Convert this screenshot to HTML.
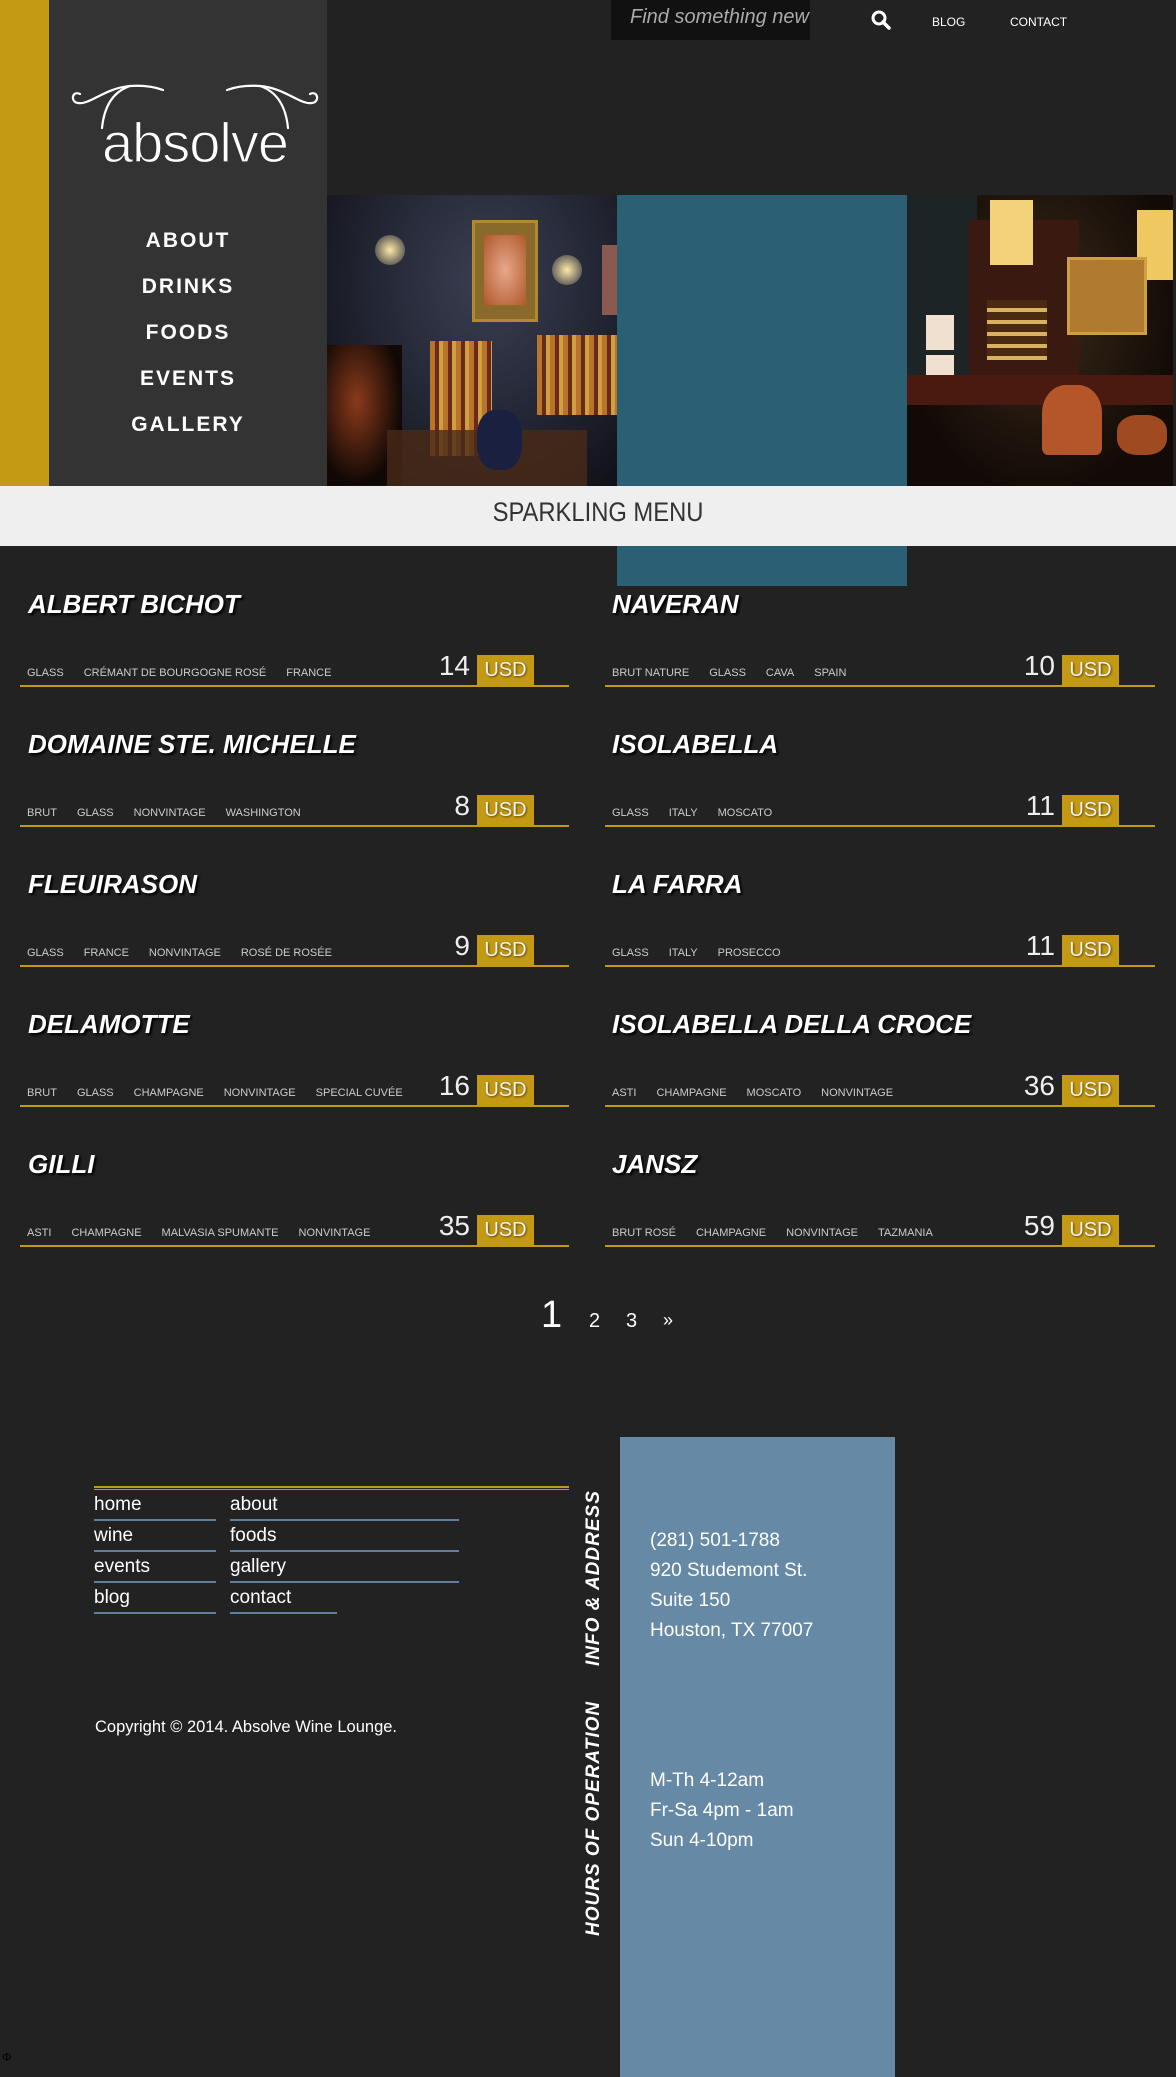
<!DOCTYPE html>
<html><head><meta charset="utf-8"><style>
*{margin:0;padding:0;box-sizing:border-box}
body{width:1176px;height:2077px;background:#222;position:relative;overflow:hidden;font-family:"Liberation Sans",sans-serif;color:#fff}
.a{position:absolute}
.nav{position:absolute;left:49px;width:278px;text-align:center;font-weight:bold;font-size:21px;letter-spacing:2px;color:#fff}
.t{position:absolute;font-weight:bold;font-style:italic;font-size:26px;text-shadow:2px 2px 2px #000;white-space:nowrap}
.tg{position:absolute;font-size:11px;color:#ccc;white-space:nowrap;word-spacing:0}
.tg span{margin-right:20px}
.pr{position:absolute;font-size:28px;color:#eee;text-align:right;width:60px}
.usd{position:absolute;width:57px;height:30px;background:#c49a15;color:#f3f3f3;font-size:20px;text-align:center;line-height:30px;text-shadow:1px 1px 2px #5a4300}
.ln{position:absolute;height:2px;background:#c49a15}
.fl{position:absolute;font-size:19px;color:#fff;border-bottom:2px solid #5f7f9c;height:31px;line-height:30px}
.inf{position:absolute;left:650px;font-size:19px;line-height:30px;color:#fff}
.vt{position:absolute;font-weight:bold;font-style:italic;font-size:19px;letter-spacing:1px;transform:rotate(-90deg);transform-origin:0 0;white-space:nowrap}
</style></head><body>
<div class="a" style="left:0;top:0;width:49px;height:486px;background:#c49a15"></div>
<div class="a" style="left:49px;top:0;width:278px;height:486px;background:#333"></div>
<div class="a" style="left:611px;top:0;width:199px;height:40px;background:#111"></div>
<div class="a" style="left:630px;top:6px;font-size:20px;font-style:italic;color:#aaa">Find something new</div>
<svg class="a" style="left:870px;top:9px" width="22" height="22" viewBox="0 0 22 22"><circle cx="9" cy="9" r="6" fill="none" stroke="#fff" stroke-width="3"/><line x1="13" y1="13" x2="19" y2="19" stroke="#fff" stroke-width="3.5" stroke-linecap="round"/></svg>
<div class="a" style="left:932px;top:15px;font-size:12px">BLOG</div>
<div class="a" style="left:1010px;top:15px;font-size:12px">CONTACT</div>
<svg class="a" style="left:60px;top:70px" width="270" height="110" viewBox="0 0 270 110">
<g fill="none" stroke="#fff" stroke-width="2.2" stroke-linecap="round">
<path d="M20 24 C12 20 10 32 18 33 C30 35 45 18 70 16 C85 15 95 17 103 20"/>
<path d="M70 16 C52 22 44 38 42 58"/>
<path d="M250 24 C258 20 260 32 252 33 C240 35 225 18 200 16 C185 15 175 17 167 20"/>
<path d="M200 16 C218 22 226 38 228 58"/>
</g>
<text x="135" y="92" text-anchor="middle" font-family="Liberation Sans" font-size="56" fill="#fff" stroke="#333" stroke-width="1.2" letter-spacing="-1">absolve</text>
</svg>
<div class="nav" style="top:229px">ABOUT</div>
<div class="nav" style="top:275px">DRINKS</div>
<div class="nav" style="top:321px">FOODS</div>
<div class="nav" style="top:367px">EVENTS</div>
<div class="nav" style="top:413px">GALLERY</div>
<div class="a" style="left:327px;top:195px;width:290px;height:291px;background:radial-gradient(ellipse at 55% 30%,#3a3f52 0%,#232634 50%,#0c0b10 100%);overflow:hidden">
<div class="a" style="left:145px;top:25px;width:66px;height:102px;background:#8a6a2a;border:3px solid #b08a30"></div>
<div class="a" style="left:157px;top:40px;width:42px;height:70px;background:radial-gradient(#e6a88a,#b0572a)"></div>
<div class="a" style="left:48px;top:40px;width:30px;height:30px;border-radius:50%;background:radial-gradient(#ffe9a8,rgba(255,200,100,0))"></div>
<div class="a" style="left:225px;top:60px;width:30px;height:30px;border-radius:50%;background:radial-gradient(#ffe9a8,rgba(255,200,100,0))"></div>
<div class="a" style="left:275px;top:50px;width:15px;height:70px;background:#8a5a50"></div>
<div class="a" style="left:103px;top:146px;width:62px;height:115px;background:repeating-linear-gradient(90deg,#b8742a 0 5px,#6a2a1a 5px 9px,#d0a040 9px 13px)"></div>
<div class="a" style="left:210px;top:140px;width:80px;height:80px;background:repeating-linear-gradient(90deg,#b8742a 0 5px,#6a2a1a 5px 9px,#d0a040 9px 13px)"></div>
<div class="a" style="left:0;top:150px;width:75px;height:140px;background:radial-gradient(ellipse at 40% 40%,#8a3a1a,#100805 70%)"></div>
<div class="a" style="left:60px;top:235px;width:200px;height:56px;background:#4a2a18;opacity:.8"></div>
<div class="a" style="left:150px;top:215px;width:45px;height:60px;border-radius:40%;background:#1a2040"></div>
</div>
<div class="a" style="left:617px;top:195px;width:290px;height:391px;background:#2b5f74"></div>
<div class="a" style="left:907px;top:195px;width:266px;height:291px;background:radial-gradient(ellipse at 50% 40%,#3a2a1a,#120a06 75%);overflow:hidden">
<div class="a" style="left:0;top:0;width:70px;height:180px;background:#1c2426"></div>
<div class="a" style="left:62px;top:25px;width:110px;height:160px;background:#3a1a10"></div>
<div class="a" style="left:83px;top:5px;width:43px;height:65px;background:#f4d27a"></div>
<div class="a" style="left:230px;top:15px;width:36px;height:70px;background:#f0c860"></div>
<div class="a" style="left:160px;top:62px;width:80px;height:78px;background:#b07a30;border:3px solid #d0a040"></div>
<div class="a" style="left:80px;top:105px;width:60px;height:60px;background:repeating-linear-gradient(0deg,#d8b060 0 4px,#4a2a10 4px 12px)"></div>
<div class="a" style="left:19px;top:120px;width:28px;height:35px;background:#f0e0d0"></div>
<div class="a" style="left:19px;top:160px;width:28px;height:28px;background:#f0e0d0"></div>
<div class="a" style="left:0;top:180px;width:266px;height:30px;background:#4a1a10"></div>
<div class="a" style="left:135px;top:190px;width:60px;height:70px;border-radius:40% 40% 10% 10%;background:#b4562a"></div>
<div class="a" style="left:210px;top:220px;width:50px;height:40px;border-radius:40%;background:#a04a22"></div>
</div>
<div class="a" style="left:0;top:486px;width:1176px;height:60px;background:#efefef"></div>
<div class="a" style="left:0;top:497px;width:1196px;text-align:center;font-size:27px;color:#333;transform:scaleX(.88);transform-origin:598px 0">SPARKLING MENU</div>

<div class="t" style="left:28px;top:589px">ALBERT BICHOT</div>
<div class="tg" style="left:27px;top:667px"><span>GLASS</span><span>CRÉMANT DE BOURGOGNE ROSÉ</span><span>FRANCE</span></div>
<div class="pr" style="left:410px;top:650px">14</div><div class="usd" style="left:477px;top:655px">USD</div><div class="ln" style="left:20px;top:685px;width:549px"></div>
<div class="t" style="left:612px;top:589px">NAVERAN</div>
<div class="tg" style="left:612px;top:667px"><span>BRUT NATURE</span><span>GLASS</span><span>CAVA</span><span>SPAIN</span></div>
<div class="pr" style="left:995px;top:650px">10</div><div class="usd" style="left:1062px;top:655px">USD</div><div class="ln" style="left:605px;top:685px;width:550px"></div>

<div class="t" style="left:28px;top:729px">DOMAINE STE. MICHELLE</div>
<div class="tg" style="left:27px;top:807px"><span>BRUT</span><span>GLASS</span><span>NONVINTAGE</span><span>WASHINGTON</span></div>
<div class="pr" style="left:410px;top:790px">8</div><div class="usd" style="left:477px;top:795px">USD</div><div class="ln" style="left:20px;top:825px;width:549px"></div>
<div class="t" style="left:612px;top:729px">ISOLABELLA</div>
<div class="tg" style="left:612px;top:807px"><span>GLASS</span><span>ITALY</span><span>MOSCATO</span></div>
<div class="pr" style="left:995px;top:790px">11</div><div class="usd" style="left:1062px;top:795px">USD</div><div class="ln" style="left:605px;top:825px;width:550px"></div>

<div class="t" style="left:28px;top:869px">FLEUIRASON</div>
<div class="tg" style="left:27px;top:947px"><span>GLASS</span><span>FRANCE</span><span>NONVINTAGE</span><span>ROSÉ DE ROSÉE</span></div>
<div class="pr" style="left:410px;top:930px">9</div><div class="usd" style="left:477px;top:935px">USD</div><div class="ln" style="left:20px;top:965px;width:549px"></div>
<div class="t" style="left:612px;top:869px">LA FARRA</div>
<div class="tg" style="left:612px;top:947px"><span>GLASS</span><span>ITALY</span><span>PROSECCO</span></div>
<div class="pr" style="left:995px;top:930px">11</div><div class="usd" style="left:1062px;top:935px">USD</div><div class="ln" style="left:605px;top:965px;width:550px"></div>

<div class="t" style="left:28px;top:1009px">DELAMOTTE</div>
<div class="tg" style="left:27px;top:1087px"><span>BRUT</span><span>GLASS</span><span>CHAMPAGNE</span><span>NONVINTAGE</span><span>SPECIAL CUVÉE</span></div>
<div class="pr" style="left:410px;top:1070px">16</div><div class="usd" style="left:477px;top:1075px">USD</div><div class="ln" style="left:20px;top:1105px;width:549px"></div>
<div class="t" style="left:612px;top:1009px">ISOLABELLA DELLA CROCE</div>
<div class="tg" style="left:612px;top:1087px"><span>ASTI</span><span>CHAMPAGNE</span><span>MOSCATO</span><span>NONVINTAGE</span></div>
<div class="pr" style="left:995px;top:1070px">36</div><div class="usd" style="left:1062px;top:1075px">USD</div><div class="ln" style="left:605px;top:1105px;width:550px"></div>

<div class="t" style="left:28px;top:1149px">GILLI</div>
<div class="tg" style="left:27px;top:1227px"><span>ASTI</span><span>CHAMPAGNE</span><span>MALVASIA SPUMANTE</span><span>NONVINTAGE</span></div>
<div class="pr" style="left:410px;top:1210px">35</div><div class="usd" style="left:477px;top:1215px">USD</div><div class="ln" style="left:20px;top:1245px;width:549px"></div>
<div class="t" style="left:612px;top:1149px">JANSZ</div>
<div class="tg" style="left:612px;top:1227px"><span>BRUT ROSÉ</span><span>CHAMPAGNE</span><span>NONVINTAGE</span><span>TAZMANIA</span></div>
<div class="pr" style="left:995px;top:1210px">59</div><div class="usd" style="left:1062px;top:1215px">USD</div><div class="ln" style="left:605px;top:1245px;width:550px"></div>

<div class="a" style="left:541px;top:1294px;font-size:38px">1</div>
<div class="a" style="left:589px;top:1310px;font-size:20px">2</div>
<div class="a" style="left:626px;top:1310px;font-size:20px">3</div>
<div class="a" style="left:663px;top:1310px;font-size:18px">»</div>

<div class="a" style="left:620px;top:1437px;width:275px;height:640px;background:#668aa5"></div>
<div class="a" style="left:94px;top:1486px;width:475px;height:4px;border-top:2px solid #c49a15;border-bottom:1px solid #c49a15"></div>
<div class="fl" style="left:94px;top:1490px;width:122px">home</div>
<div class="fl" style="left:230px;top:1490px;width:229px">about</div>
<div class="fl" style="left:94px;top:1521px;width:122px">wine</div>
<div class="fl" style="left:230px;top:1521px;width:229px">foods</div>
<div class="fl" style="left:94px;top:1552px;width:122px">events</div>
<div class="fl" style="left:230px;top:1552px;width:229px">gallery</div>
<div class="fl" style="left:94px;top:1583px;width:122px">blog</div>
<div class="fl" style="left:230px;top:1583px;width:107px">contact</div>
<div class="a" style="left:95px;top:1718px;font-size:16.5px">Copyright © 2014. Absolve Wine Lounge.</div>
<div class="vt" style="left:583px;top:1666px">INFO &amp; ADDRESS</div>
<div class="vt" style="left:583px;top:1936px">HOURS OF OPERATION</div>
<div class="inf" style="top:1526px">(281) 501-1788<br>920 Studemont St.<br>Suite 150<br>Houston, TX 77007</div>
<div class="inf" style="top:1766px">M-Th 4-12am<br>Fr-Sa 4pm - 1am<br>Sun 4-10pm</div>
<div class="a" style="left:2px;top:2050px;font-size:12px;color:#000">Φ</div>
</body></html>
